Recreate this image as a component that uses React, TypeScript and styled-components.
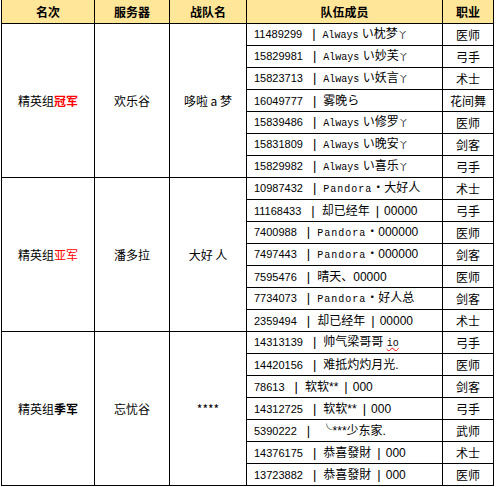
import React from 'react';
import styled, {createGlobalStyle} from 'styled-components';

const GlobalStyle = createGlobalStyle`
    html, body {
        margin: 0;
        padding: 0;
        background: #fff;
    }
    body {
        font-family: "Liberation Sans", "Noto Sans CJK SC", sans-serif;
        font-size: 12px;
        color: #000;
    }
`

const Table = styled.table`
    border-collapse: collapse;
    table-layout: fixed;
    width: 492px;
    margin-left: 1px;
`

const Col = styled.col<{ $w: number }>`
    width: ${p => p.$w}px;
`

const Head = styled.th`
    height: 23px;
    padding: 0;
    background: #ffe699;
    border: 1px solid #000;
    border-top: none;
    font-family: "Noto Sans CJK SC", sans-serif;
    font-size: 12px;
    font-weight: bold;
    text-align: center;
    vertical-align: middle;
`

const GroupCell = styled.td`
    padding: 0;
    border: 1px solid #000;
    text-align: center;
    vertical-align: middle;
    font-family: "Noto Sans CJK SC", sans-serif;
    font-size: 12px;
    white-space: pre;
`

const Medal = styled.span<{ $red: boolean; $bold: boolean }>`
    color: ${p => p.$red ? '#ff0000' : '#000'};
    font-weight: ${p => p.$bold ? 'bold' : 'normal'};
`

const MemberCell = styled.td`
    height: 21px;
    padding: 0 0 0 7px;
    border: 1px solid #000;
    white-space: nowrap;
    overflow: hidden;
    font-size: 12px;
    line-height: 14px;
    vertical-align: middle;
`

const Id = styled.span`
    font-family: "Liberation Sans", sans-serif;
    font-size: 11px;
`

const Bar = styled.span<{ $lead?: boolean }>`
    display: inline-block;
    margin: ${p => p.$lead ? '0 7px 0 10px' : '0 5px 0 6px'};
    font-family: "Liberation Sans", sans-serif;
    font-size: 13px;
`

const Latin = styled.span<{ $spaced?: boolean; $typo?: boolean }>`
    font-family: "Liberation Mono", monospace;
    font-size: 10px;
    letter-spacing: ${p => p.$spaced ? '1px' : '0'};
    text-decoration: ${p => p.$typo ? 'underline wavy #ff0000' : 'none'};
    text-decoration-thickness: 1px;
`

const Tail = styled.span`
    font-size: 9px;
`

const JobCell = styled.td`
    height: 21px;
    padding: 0;
    border: 1px solid #000;
    text-align: center;
    vertical-align: middle;
    font-family: "Noto Sans CJK SC", sans-serif;
    font-size: 12px;
    white-space: nowrap;
`

type Member = { id: string; name: React.ReactNode; job: string };
type Group = {
    medal: string;
    red: boolean;
    bold: boolean;
    server: string;
    team: string;
    members: Member[];
};

const Sep = () => <Bar>|</Bar>;

const groups: Group[] = [
    {
        medal: '冠军', red: true, bold: true, server: '欢乐谷', team: '哆啦 a 梦',
        members: [
            {id: '11489299', name: <><Latin>Always</Latin> い枕梦<Tail>丫</Tail></>, job: '医师'},
            {id: '15829981', name: <><Latin>Always</Latin> い妙芙<Tail>丫</Tail></>, job: '弓手'},
            {id: '15823713', name: <><Latin>Always</Latin> い妖言<Tail>丫</Tail></>, job: '术士'},
            {id: '16049777', name: <>雾晚ら</>, job: '花间舞'},
            {id: '15839486', name: <><Latin>Always</Latin> い修罗<Tail>丫</Tail></>, job: '医师'},
            {id: '15831809', name: <><Latin>Always</Latin> い晚安<Tail>丫</Tail></>, job: '剑客'},
            {id: '15829982', name: <><Latin>Always</Latin> い喜乐<Tail>丫</Tail></>, job: '弓手'},
        ],
    },
    {
        medal: '亚军', red: true, bold: false, server: '潘多拉', team: '大好 人',
        members: [
            {id: '10987432', name: <><Latin $spaced>Pandora</Latin>・大好人</>, job: '术士'},
            {id: '11168433', name: <>却已经年<Sep/>00000</>, job: '弓手'},
            {id: '7400988', name: <><Latin $spaced>Pandora</Latin>・000000</>, job: '医师'},
            {id: '7497443', name: <><Latin $spaced>Pandora</Latin>・000000</>, job: '剑客'},
            {id: '7595476', name: <>晴天、00000</>, job: '医师'},
            {id: '7734073', name: <><Latin $spaced>Pandora</Latin>・好人总</>, job: '剑客'},
            {id: '2359494', name: <>却已经年<Sep/>00000</>, job: '术士'},
        ],
    },
    {
        medal: '季军', red: false, bold: true, server: '忘忧谷', team: '****',
        members: [
            {id: '14313139', name: <>帅气梁哥哥 <Latin $typo>io</Latin></>, job: '弓手'},
            {id: '14420156', name: <>难抵灼灼月光.</>, job: '医师'},
            {id: '78613', name: <>软软**<Sep/>000</>, job: '剑客'},
            {id: '14312725', name: <>软软**<Sep/>000</>, job: '弓手'},
            {id: '5390222', name: <>&nbsp;╰***少东家.</>, job: '武师'},
            {id: '14376175', name: <>恭喜發財<Sep/>000</>, job: '术士'},
            {id: '13723882', name: <>恭喜發財<Sep/>000</>, job: '医师'},
        ],
    },
];

const columns = [
    {title: '名次', width: 93},
    {title: '服务器', width: 75},
    {title: '战队名', width: 77},
    {title: '队伍成员', width: 196},
    {title: '职业', width: 51},
];

export default function App() {
    return (
        <>
            <GlobalStyle/>
            <Table>
                <colgroup>
                    {columns.map(c => <Col key={c.title} $w={c.width}/>)}
                </colgroup>
                <thead>
                <tr>
                    {columns.map(c => <Head key={c.title}>{c.title}</Head>)}
                </tr>
                </thead>
                <tbody>
                {groups.map(g => g.members.map((m, i) => (
                    <tr key={m.id + g.medal}>
                        {i === 0 && (
                            <>
                                <GroupCell rowSpan={g.members.length}>
                                    精英组<Medal $red={g.red} $bold={g.bold}>{g.medal}</Medal>
                                </GroupCell>
                                <GroupCell rowSpan={g.members.length}>{g.server}</GroupCell>
                                <GroupCell rowSpan={g.members.length}>{g.team}</GroupCell>
                            </>
                        )}
                        <MemberCell>
                            <Id>{m.id}</Id><Bar $lead>|</Bar>{m.name}
                        </MemberCell>
                        <JobCell>{m.job}</JobCell>
                    </tr>
                )))}
                </tbody>
            </Table>
        </>
    );
}
